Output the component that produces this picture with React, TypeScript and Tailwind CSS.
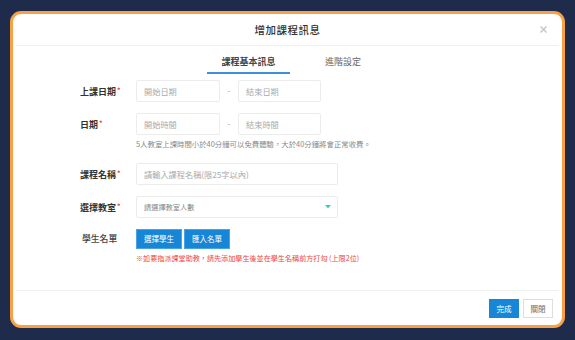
import React from 'react';

const font = { fontFamily: '"Noto Sans CJK TC", "Noto Sans", sans-serif' };

function Label({ text, required }: { text: string; required?: boolean }) {
  return (
    <div className="w-[56px] shrink-0 text-[9px] font-bold text-[#333] leading-none">
      {text}
      {required && <span className="text-[#e8453c] align-top text-[7px] ml-[1px]">*</span>}
    </div>
  );
}

function Input({ placeholder, w }: { placeholder: string; w: string }) {
  return (
    <div className={`${w} h-[22px] rounded-[2px] border border-[#ececec] flex items-center pl-[7px] text-[8.2px] text-[#aaaaaa]`}>
      {placeholder}
    </div>
  );
}

export default function App() {
  return (
    <div className="w-[575px] h-[340px] bg-[#1e2b4b] pt-[11px] pl-[10px]" style={font}>
      <div className="w-[555px] h-[317px] rounded-[11px] border-[3px] border-[#f7a044] bg-white flex flex-col">

        {/* header */}
        <div className="relative h-[31px] flex items-center justify-center">
          <span className="text-[10.5px] font-medium text-[#333] tracking-[0.5px]">增加課程訊息</span>
          <svg className="absolute right-[15px] top-[12px]" width="7" height="7" viewBox="0 0 7 7">
            <path d="M0.5 0.5 L6.5 6.5 M6.5 0.5 L0.5 6.5" stroke="#c4c4c4" strokeWidth="1.4" />
          </svg>
        </div>
        <div className="mx-[3px] border-b border-[#f0f0f0]" />

        {/* tabs */}
        <div className="h-[28px] flex items-end pl-[194px]">
          <div className="w-[83px] text-center pb-[4px] leading-[12px] text-[9px] font-bold text-[#444] border-b-2 border-[#3d8fdc]">
            課程基本訊息
          </div>
          <div className="w-[106px] text-center pb-[6px] leading-[12px] text-[9px] text-[#666]">
            進階設定
          </div>
        </div>

        {/* form */}
        <div className="pl-[67px] pt-[6px] flex flex-col">
          <div className="flex items-center">
            <Label text="上課日期" required />
            <Input placeholder="開始日期" w="w-[84px]" />
            <div className="w-[18px] text-center text-[8px] text-[#999]">-</div>
            <Input placeholder="結束日期" w="w-[83px]" />
          </div>

          <div className="flex items-center mt-[11px]">
            <Label text="日期" required />
            <Input placeholder="開始時間" w="w-[84px]" />
            <div className="w-[18px] text-center text-[8px] text-[#999]">-</div>
            <Input placeholder="結束時間" w="w-[83px]" />
          </div>

          <div className="pl-[56px] mt-[4px] text-[7.4px] leading-[10px] text-[#8a8a8a]">
            5人教室上課時間小於40分鐘可以免費體驗，大於40分鐘將會正常收費。
          </div>

          <div className="flex items-center mt-[14px]">
            <Label text="課程名稱" required />
            <Input placeholder="請輸入課程名稱(限25字以內)" w="w-[202px]" />
          </div>

          <div className="flex items-center mt-[11px]">
            <Label text="選擇教室" required />
            <div className="w-[202px] h-[22px] rounded-[2px] border border-[#ececec] flex items-center justify-between pl-[7px] pr-[6px] text-[7.2px] text-[#888]">
              請選擇教室人數
              <svg width="6" height="4" viewBox="0 0 6 4">
                <path d="M0 0 H6 L3 3.5 Z" fill="#3fcfbf" />
              </svg>
            </div>
          </div>

          <div className="flex items-center mt-[11px]">
            <div className="w-[56px] shrink-0 pl-[2px] text-[8.8px] font-medium text-[#444] leading-none">學生名單</div>
            <div className="flex gap-[2px]">
              <button className="w-[46px] h-[20px] bg-[#1886d7] border border-[#4aa3e4] text-white text-[7.5px]">選擇學生</button>
              <button className="w-[46px] h-[20px] bg-[#1886d7] border border-[#4aa3e4] text-white text-[7.5px]">匯入名單</button>
            </div>
          </div>

          <div className="pl-[56px] mt-[4px] text-[7.1px] leading-[10px] text-[#f0443c]">
            ※如要指派課堂助教，請先添加學生後並在學生名稱前方打勾 (上限2位)
          </div>
        </div>

        {/* footer */}
        <div className="mt-auto">
          <div className="mx-[3px] border-b border-[#f0f0f0]" />
          <div className="flex justify-end gap-[4px] pr-[9px] pt-[8px] pb-[7px]">
            <button className="w-[30px] h-[19px] bg-[#1886d7] text-white text-[7.5px]">完成</button>
            <button className="w-[30px] h-[19px] bg-white border border-[#dedede] text-[#666] text-[7.5px]">關閉</button>
          </div>
        </div>

      </div>
    </div>
  );
}
